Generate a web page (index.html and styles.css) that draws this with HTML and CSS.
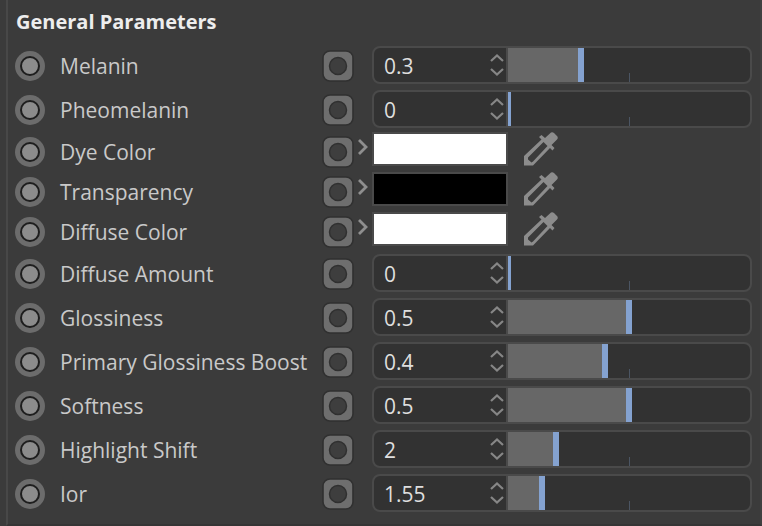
FILE: index.html
```html
<!DOCTYPE html>
<html lang="en">
<head>
<meta charset="utf-8">
<title>General Parameters</title>
<link rel="stylesheet" href="styles.css">
</head>
<body>
<svg class="defs" aria-hidden="true">
  <symbol id="key" viewBox="0 0 30 30"><circle cx="15" cy="15" r="15" fill="#6c6c6c"/><circle cx="15" cy="15" r="9" fill="#8c8c8c" stroke="#1e1e1e" stroke-width="2"/></symbol>
  <symbol id="port" viewBox="0 0 32 32"><rect x="1" y="1" width="30" height="30" rx="7" fill="#6e6e6e" stroke="#303030" stroke-width="1.600"/><circle cx="16" cy="16" r="8.500" fill="#3e3e3e" stroke="#303030" stroke-width="1.500"/></symbol>
  <symbol id="up" viewBox="0 0 14 8"><path d="M1 7l6-5.500L13 7" fill="none" stroke="#868686" stroke-width="2.200"/></symbol>
  <symbol id="down" viewBox="0 0 14 8"><path d="M1 1l6 5.500L13 1" fill="none" stroke="#868686" stroke-width="2.200"/></symbol>
  <symbol id="more" viewBox="0 0 10 16"><path d="M1 1l7 7L1 15" fill="none" stroke="#8f8f8f" stroke-width="2.800"/></symbol>
  <symbol id="pick" viewBox="0 0 34 34"><path fill="#8c8c8c" fill-rule="evenodd" d="M0 33.500V24L17.500 7.500L15 5L17.500 3L21 6L27 .5Q28.500 -.3 30 1L33 4Q34.500 5.500 33 7.500L27.500 13L30.500 16L28.500 18.500L26 16L9 33.500ZM4 25.500V27.500L7.500 30.500L9 29.500L23.500 14L19.500 10Z"/></symbol>
</svg>
<main class="panel">
  <h1 class="title">General Parameters</h1>
  <div class="rows" id="rows"></div>
</main>
<script src="script.js"></script>
</body>
</html>
```
FILE: styles.css
```css
* { box-sizing: border-box; }

body {
  margin: 0;
  min-height: 100vh;
  display: flex;
  padding-left: 6px;
  background: #3b3b3b;
  color: #c9c9c9;
  font-family: "Open Sans", "Noto Sans", sans-serif;
  font-size: 21px;
}

.defs { position: absolute; width: 0; height: 0; }
svg { display: block; }

.panel {
  flex: 1;
  padding: 0 8px 0 7px;
  border-left: 2px solid #484848;
  border-right: 2px solid #404040;
  border-bottom: 2px solid #353535;
}

.title {
  margin: 0;
  height: 44px;
  padding-left: 1px;
  line-height: 44px;
  font-size: 20px;
  font-weight: 700;
  color: #ededed;
}

.row {
  display: grid;
  grid-template-columns: 30px 277px 32px 18px 1fr;
  align-items: center;
  height: 44px;
}

.row.color { height: 40px; }

.label {
  padding-left: 15px;
  line-height: 30px;
  white-space: nowrap;
}

button {
  display: flex;
  align-items: center;
  justify-content: center;
  padding: 0;
  border: 0;
  background: none;
}

.key svg { width: 30px; height: 30px; }
.port svg { width: 32px; height: 32px; }

.more {
  align-self: start;
  height: 30px;
}
.more svg { width: 10px; height: 16px; }

.field {
  align-self: start;
  margin-top: 2px;
  display: grid;
  grid-template-columns: 132px 1fr;
  height: 38px;
  border: 2px solid #4a4a4a;
  border-radius: 8px;
  background: #323232;
  overflow: hidden;
}

.number { display: flex; }

.value {
  flex: 1;
  min-width: 0;
  padding: 2px 0 0 10px;
  border: 0;
  background: none;
  color: #dedede;
  font: inherit;
  outline: 0;
}

.spin {
  display: flex;
  flex-direction: column;
  justify-content: center;
  gap: 6px;
  padding-right: 2px;
}
.spin svg { width: 14px; height: 8px; }

.slider {
  border-left: 2px solid #4a4a4a;
  overflow: hidden;
  background: linear-gradient(#4b5563, #4b5563) 50% 100% / 1px 9px no-repeat;
}

.range {
  display: block;
  appearance: none;
  width: calc(100% + 6px);
  height: 100%;
  margin: 0 -3px;
  background: linear-gradient(#676767, #676767) 0 0 / var(--fill) 100% no-repeat;
}

.range::-webkit-slider-thumb {
  appearance: none;
  width: 6px;
  height: 34px;
  border: 0;
  border-radius: 0;
  background: #84a2d0;
}

.tint {
  align-self: start;
  display: flex;
  gap: 16px;
}

.swatch {
  appearance: none;
  width: 136px;
  height: 34px;
  padding: 0;
  border: 2px solid #4a4a4a;
  background: none;
}
.swatch::-webkit-color-swatch-wrapper { padding: 0; }
.swatch::-webkit-color-swatch { border: 0; border-radius: 0; }

.pick svg { width: 34px; height: 34px; }
```
FILE: script.js
```js
const parameters = [
  { name: "Melanin", value: "0.3", percent: 30 },
  { name: "Pheomelanin", value: "0", percent: 0 },
  { name: "Dye Color", color: "#ffffff" },
  { name: "Transparency", color: "#000000" },
  { name: "Diffuse Color", color: "#ffffff" },
  { name: "Diffuse Amount", value: "0", percent: 0 },
  { name: "Glossiness", value: "0.5", percent: 50 },
  { name: "Primary Glossiness Boost", value: "0.4", percent: 40 },
  { name: "Softness", value: "0.5", percent: 50 },
  { name: "Highlight Shift", value: "2", percent: 20 },
  { name: "Ior", value: "1.55", percent: 14 },
];

const button = (cls, icon, label) =>
  `<button type="button" class="${cls}" aria-label="${label}"><svg><use href="#${icon}"/></svg></button>`;

const field = (p, id) => `
  <div class="field">
    <div class="number">
      <input class="value" id="${id}" type="text" value="${p.value}">
      <div class="spin">${button("step", "up", "Increase")}${button("step", "down", "Decrease")}</div>
    </div>
    <div class="slider">
      <input class="range" type="range" min="0" max="100" value="${p.percent}" aria-label="${p.name}" style="--fill:${p.percent}%">
    </div>
  </div>`;

const tint = (p, id) => `
  <div class="tint">
    <input class="swatch" id="${id}" type="color" value="${p.color}">
    ${button("pick", "pick", "Pick color")}
  </div>`;

document.getElementById("rows").innerHTML = parameters.map((p, i) => {
  const id = `param-${i}`;
  return `<div class="row${p.color ? " color" : ""}">
    ${button("key", "key", "Keyframe")}
    <label class="label" for="${id}">${p.name}</label>
    ${button("port", "port", "Texture")}
    ${p.color ? button("more", "more", "Expand") + tint(p, id) : "<span></span>" + field(p, id)}
  </div>`;
}).join("");
```
